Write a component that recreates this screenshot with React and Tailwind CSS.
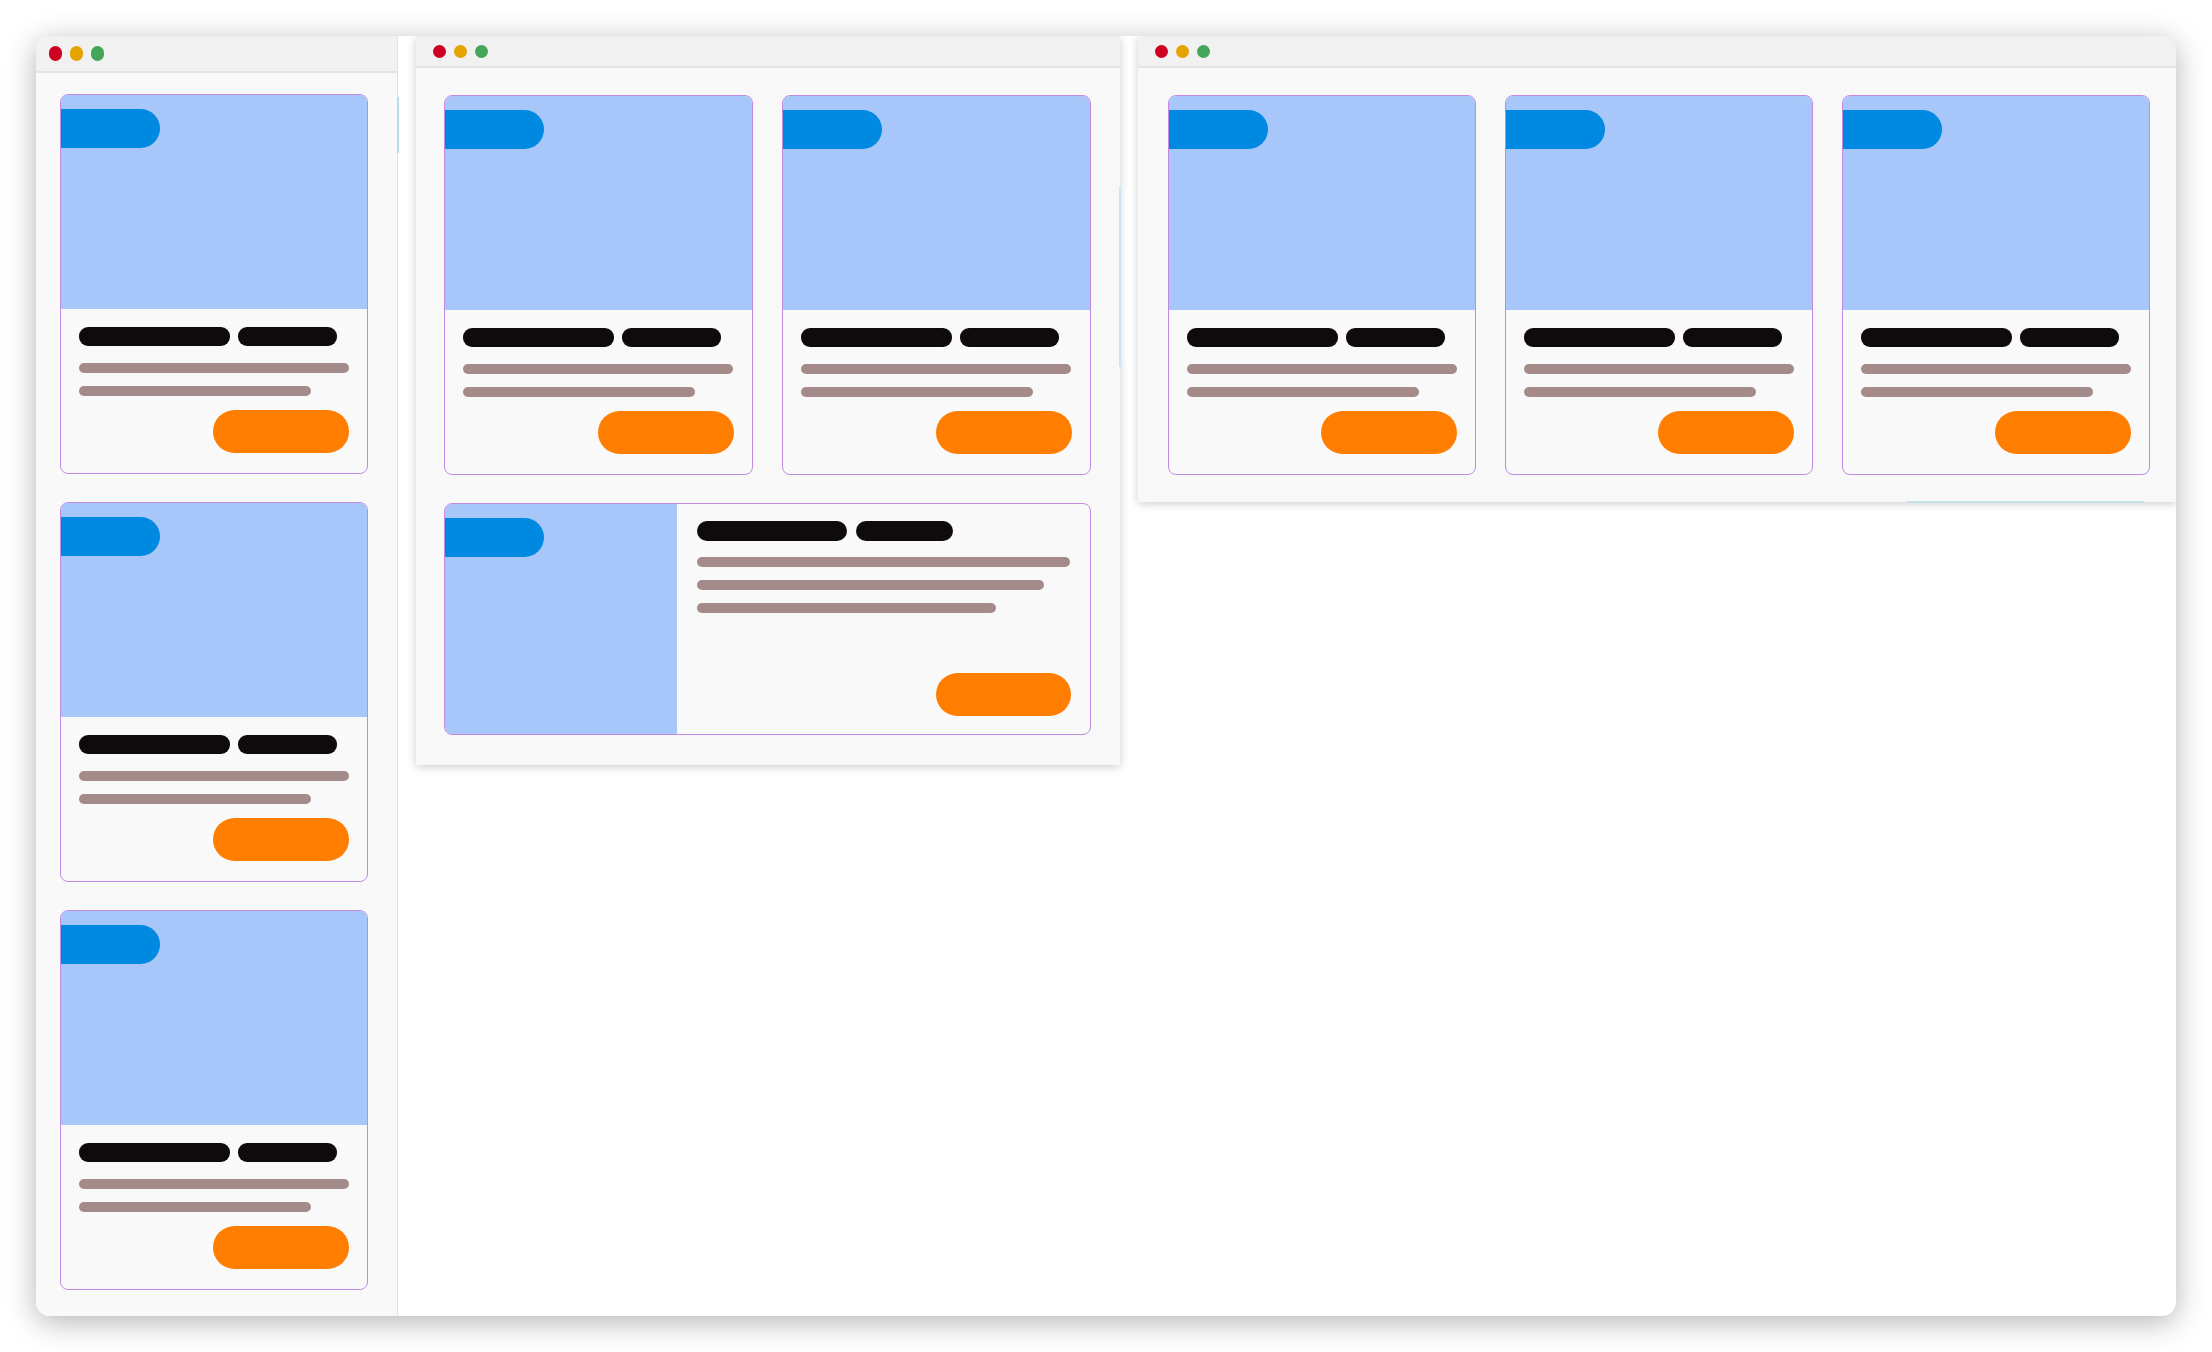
import React from "react";

function Dots({ big }) {
  const cls = big ? "w-[13px] h-[15px]" : "w-[13px] h-[13px]";
  return (
    <div className="flex items-center gap-[8px]">
      <div className={`${cls} rounded-full bg-[#cf0120]`} />
      <div className={`${cls} rounded-full bg-[#e3a300]`} />
      <div className={`${cls} rounded-full bg-[#44a65a]`} />
    </div>
  );
}

function Card({ w = "w-[308px]" }) {
  return (
    <div className={`${w} h-[380px] shrink-0 flex flex-col rounded-[8px] border-[1.5px] border-[#c18ae0] bg-[#f9f9f9] overflow-hidden`}>
      <div className="h-[214px] shrink-0 bg-[#a7c6fa] pt-[14px]">
        <div className="w-[99px] h-[39px] rounded-r-full bg-[#0089e1]" />
      </div>
      <div className="flex flex-col px-[18px] pt-[18px] pb-[19px]">
        <div className="flex gap-[8px]">
          <div className="w-[151px] h-[19px] rounded-[9px] bg-[#0f0b0c]" />
          <div className="w-[99px] h-[19px] rounded-[9px] bg-[#0f0b0c]" />
        </div>
        <div className="mt-[17px] w-[270px] h-[10px] rounded-full bg-[#a58a8a]" />
        <div className="mt-[13px] w-[232px] h-[10px] rounded-full bg-[#a58a8a]" />
        <div className="mt-[14px] self-end w-[136px] h-[43px] rounded-full bg-[#ff7e00]" />
      </div>
    </div>
  );
}

function WideCard() {
  return (
    <div className="w-full h-[232px] flex rounded-[8px] border-[1.5px] border-[#c18ae0] bg-[#f9f9f9] overflow-hidden">
      <div className="w-[232px] shrink-0 bg-[#a7c6fa] pt-[14px]">
        <div className="w-[99px] h-[39px] rounded-r-full bg-[#0089e1]" />
      </div>
      <div className="flex-1 flex flex-col pl-[20px] pr-[19px] pt-[17px] pb-[18px]">
        <div className="flex gap-[9px]">
          <div className="w-[150px] h-[20px] rounded-[10px] bg-[#0f0b0c]" />
          <div className="w-[97px] h-[20px] rounded-[10px] bg-[#0f0b0c]" />
        </div>
        <div className="mt-[16px] w-[373px] h-[10px] rounded-full bg-[#a58a8a]" />
        <div className="mt-[13px] w-[347px] h-[10px] rounded-full bg-[#a58a8a]" />
        <div className="mt-[13px] w-[299px] h-[10px] rounded-full bg-[#a58a8a]" />
        <div className="mt-auto self-end w-[135px] h-[43px] rounded-full bg-[#ff7e00]" />
      </div>
    </div>
  );
}

function TitleBar({ big }) {
  return (
    <div
      className={
        big
          ? "h-[37px] shrink-0 flex items-center pl-[13px] bg-[#f1f1f1] border-b-2 border-[#e3e3e3]"
          : "h-[32px] shrink-0 flex items-center pl-[17px] bg-[#f1f1f1] border-b-2 border-[#e3e3e3]"
      }
    >
      <Dots big={big} />
    </div>
  );
}

export default function App() {
  return (
    <div className="w-[2212px] h-[1352px] bg-white pl-[36px] pt-[36px]" style={{ fontFamily: '"Liberation Sans", sans-serif' }}>
      <div className="relative w-[2140px] h-[1280px] flex items-start gap-[18px] rounded-[14px] bg-white shadow-[0_6px_30px_rgba(0,0,0,0.3)] overflow-hidden">
        {/* Left window */}
        <div className="w-[362px] h-full shrink-0 flex flex-col bg-[#f9f9f9] border-r border-[#e2e2e2]">
          <TitleBar big />
          <div className="flex flex-col gap-[28px] pl-[24px] pt-[21px]">
            <Card />
            <Card />
            <Card />
          </div>
        </div>

        {/* Middle window */}
        <div className="w-[704px] h-[729px] shrink-0 flex flex-col bg-[#f8f8f8] shadow-[0_2px_9px_rgba(0,0,0,0.2)]">
          <TitleBar />
          <div className="flex flex-col gap-[28px] pl-[28px] pr-[29px] pt-[27px]">
            <div className="flex gap-[29px]">
              <Card w="w-[309px]" />
              <Card w="w-[309px]" />
            </div>
            <WideCard />
          </div>
        </div>

        {/* Right window */}
        <div className="w-[1038px] h-[466px] shrink-0 flex flex-col bg-[#f8f8f8] rounded-tr-[14px] shadow-[0_2px_9px_rgba(0,0,0,0.2)]">
          <TitleBar />
          <div className="flex gap-[29px] pl-[30px] pt-[27px]">
            <Card />
            <Card />
            <Card />
          </div>
        </div>

        {/* faint artifact lines */}
        <div className="absolute left-[361px] top-[61px] w-[2px] h-[56px] bg-[#b7dcec]" />
        <div className="absolute left-[1083px] top-[151px] w-[2px] h-[180px] bg-[#c9e4ee]" />
        <div className="absolute left-[1871px] top-[465px] w-[237px] h-[2px] bg-[#c4e2ee]" />
      </div>
    </div>
  );
}
